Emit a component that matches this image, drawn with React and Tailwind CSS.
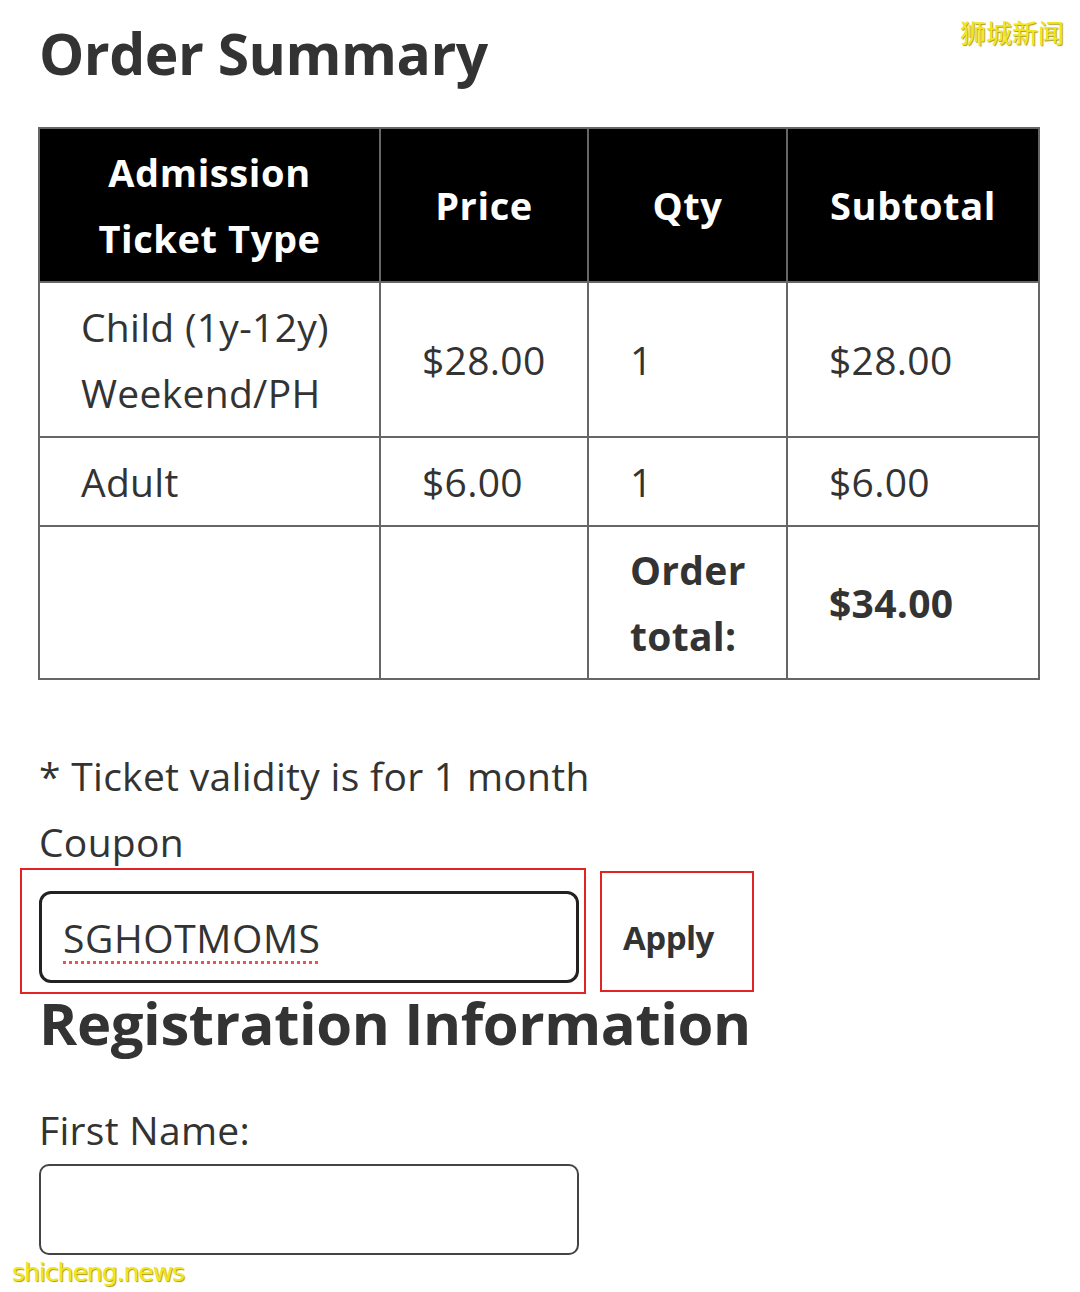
import React from "react";

const font = { fontFamily: '"Open Sans", "Noto Sans", sans-serif' };

function HeadCell({ children, className = "" }) {
  return (
    <th className={`border-2 border-[#666] bg-black text-white font-bold text-[38px] tracking-[0.6px] leading-[66px] text-center align-middle ${className}`}>
      {children}
    </th>
  );
}

function Cell({ children, bold = false, className = "" }) {
  return (
    <td className={`border-2 border-[#666] pl-[41px] pr-3 text-[39px] tracking-[0.3px] leading-[66px] align-middle text-[#333] ${bold ? "font-bold" : ""} ${className}`}>
      {children}
    </td>
  );
}

export default function App() {
  return (
    <div className="relative w-[1080px] h-[1292px] bg-white overflow-hidden text-[#333]" style={font}>
      <div className="px-[38px] pt-[18px]">
        <h1 className="text-[57px] leading-[70px] font-bold tracking-[-0.5px] pl-[1px]">Order Summary</h1>

        <table className="mt-[39px] w-[1000px] border-collapse border-2 border-[#666] table-fixed">
          <colgroup>
            <col className="w-[341px]" />
            <col className="w-[208px]" />
            <col className="w-[199px]" />
            <col className="w-[252px]" />
          </colgroup>
          <thead>
            <tr className="h-[154px]">
              <HeadCell>Admission<br />Ticket Type</HeadCell>
              <HeadCell>Price</HeadCell>
              <HeadCell>Qty</HeadCell>
              <HeadCell>Subtotal</HeadCell>
            </tr>
          </thead>
          <tbody>
            <tr className="h-[155px]">
              <Cell>Child (1y-12y)<br />Weekend/PH</Cell>
              <Cell>$28.00</Cell>
              <Cell>1</Cell>
              <Cell>$28.00</Cell>
            </tr>
            <tr className="h-[89px]">
              <Cell>Adult</Cell>
              <Cell>$6.00</Cell>
              <Cell>1</Cell>
              <Cell>$6.00</Cell>
            </tr>
            <tr className="h-[153px]">
              <Cell />
              <Cell />
              <Cell bold>Order<br />total:</Cell>
              <Cell bold>$34.00</Cell>
            </tr>
          </tbody>
        </table>

        <p className="mt-[63px] text-[39px] tracking-[0.3px] leading-[66px] pl-[1px]">* Ticket validity is for 1 month</p>
        <p className="mt-[8px] text-[39px] tracking-[0.3px] leading-[50px] pl-[1px]">Coupon</p>

        <div className="flex items-center gap-[14px] -ml-[18px] mt-[1px]">
          <div className="border-2 border-[#e02424] pl-[17px] pr-[5px] pt-[21px] pb-[9px]">
            <div className="w-[540px] h-[92px] border-[3px] border-[#222] rounded-[12px] flex items-center pl-[21px]">
              <span className="text-[39px] tracking-[0.6px] leading-none underline decoration-dotted decoration-[#f05050] decoration-[3px] underline-offset-[8px]">
                SGHOTMOMS
              </span>
            </div>
          </div>
          <div className="w-[154px] h-[121px] border-2 border-[#e02424] flex items-center pl-[21px] pt-[14px]">
            <span className="text-[33px] font-bold tracking-[-0.5px]">Apply</span>
          </div>
        </div>

        <h2 className="-mt-[4px] text-[58px] leading-[66px] font-bold tracking-[-0.4px] pl-[1px]">Registration Information</h2>

        <p className="mt-[49px] text-[39px] tracking-[0.3px] leading-[50px] pl-[1px]">First Name:</p>
        <div className="mt-[9px] ml-[1px] w-[540px] h-[91px] border-2 border-[#444] rounded-[10px]" />
      </div>

      <div
        className="absolute top-[14px] left-[960px] text-[26px] leading-[36px] text-[#f2e61c]"
        style={{ fontFamily: '"Noto Sans CJK SC", sans-serif', textShadow: "1px 1px 1px #a89a20" }}
      >
        狮城新闻
      </div>
      <div
        className="absolute top-[1256px] left-[12px] text-[25px] leading-[34px] text-[#f2e61c] tracking-[-1px]"
        style={{ fontFamily: '"DejaVu Sans", sans-serif', textShadow: "1px 1px 1px #a89a20" }}
      >
        shicheng.news
      </div>
    </div>
  );
}
